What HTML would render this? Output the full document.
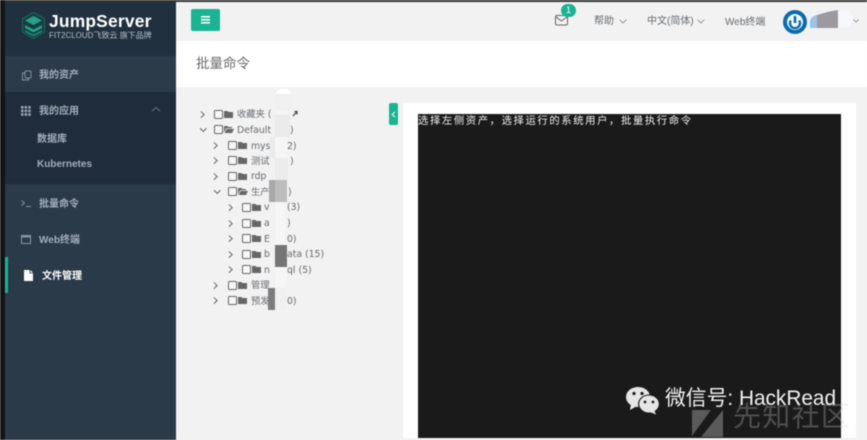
<!DOCTYPE html>
<html><head><meta charset="utf-8">
<style>
html,body{margin:0;padding:0;width:867px;height:440px;overflow:hidden;background:#f2f2f3}
body{font-family:"Liberation Sans","Noto Sans CJK SC",sans-serif;position:relative}
div,span,svg{position:absolute;white-space:nowrap}
#wrap{position:absolute;left:0;top:0;width:867px;height:440px;overflow:hidden;filter:blur(.45px)}
.nav{color:#a3aebb;font-size:10px;font-weight:bold;line-height:14px;margin-top:1px}
.t{color:#676a6c;font-size:9.3px;line-height:14px;font-family:"DejaVu Sans","Noto Sans CJK SC",sans-serif;margin-top:1px}
.cb{width:6.5px;height:6.5px;border:1px solid #666;border-radius:1.5px;background:#f7f7f7;margin-top:-1px}
.ar{width:3.5px;height:3.5px;border-top:1px solid #666;border-right:1px solid #666;transform:rotate(45deg);margin-left:-1px}
.ad{width:3.5px;height:3.5px;border-bottom:1px solid #666;border-right:1px solid #666;transform:rotate(45deg);margin-top:-1px}
.top{color:#676a6c;font-size:10px;line-height:14px;margin-top:1px}
</style></head><body><div id="wrap">

<!-- frame -->
<div style="left:0;top:0;width:867px;height:2px;background:#333"></div>
<div style="left:0;top:0;width:5px;height:440px;background:#141414"></div>

<!-- sidebar -->
<div style="left:5px;top:2px;width:171px;height:438px;background:#2a3a49"></div>
<div style="left:5px;top:2px;width:171px;height:54px;background:#20303f"></div>
<div style="left:5px;top:56px;width:171px;height:36px;background:#2b3b4a"></div>
<div style="left:5px;top:92px;width:171px;height:92px;background:#1e2c3b"></div>
<div style="left:5px;top:257px;width:3px;height:36px;background:#1ab394"></div>

<!-- logo -->
<svg style="left:21px;top:11px" width="25" height="29" viewBox="0 0 25 29">
<path d="M12.5 1.5 23.5 7.5V21L12.5 27.5 1.5 21V7.5Z" fill="#1b3a42" stroke="#1b6b60" stroke-width="1"/>
<path d="M4 9.5 12.5 5 21 9.5 12.5 14Z" fill="#21a585"/>
<path d="M4 14 12.5 18.5 21 14V17L12.5 21.5 4 17Z" fill="#21a585"/>
<path d="M4 19 12.5 23.5 21 19V21L12.5 25.5 4 21Z" fill="#1c8a70"/>
</svg>
<div style="left:49px;top:9px;color:#fff;font-size:17.4px;font-weight:bold;line-height:24px;letter-spacing:.2px">JumpServer</div>
<div style="left:49px;top:30px;color:#b6bfc8;font-size:8px;line-height:11px">FIT2CLOUD飞致云 旗下品牌</div>

<!-- nav -->
<svg style="left:21px;top:70px" width="11" height="11" viewBox="0 0 11 11" fill="none" stroke="#8a95a2" stroke-width=".9"><rect x="4" y="1" width="6" height="7" rx="1"/><path d="M4 3H1.5V10H7.5V8"/></svg>
<div class="nav" style="left:39px;top:68px">我的资产</div>

<svg style="left:21px;top:106px" width="10" height="10" viewBox="0 0 10 10" fill="#97a1ad"><rect x="0" y="0" width="2.6" height="2.6"/><rect x="3.6" y="0" width="2.6" height="2.6"/><rect x="7.2" y="0" width="2.6" height="2.6"/><rect x="0" y="3.6" width="2.6" height="2.6"/><rect x="3.6" y="3.6" width="2.6" height="2.6"/><rect x="7.2" y="3.6" width="2.6" height="2.6"/><rect x="0" y="7.2" width="2.6" height="2.6"/><rect x="3.6" y="7.2" width="2.6" height="2.6"/><rect x="7.2" y="7.2" width="2.6" height="2.6"/></svg>
<div class="nav" style="left:39px;top:104px">我的应用</div>
<svg style="left:151px;top:106px" width="10" height="6" viewBox="0 0 10 6" fill="none" stroke="#6d7a88" stroke-width=".9"><path d="M1 5 5 1.5 9 5"/></svg>
<div class="nav" style="left:37px;top:132px">数据库</div>
<div class="nav" style="left:37px;top:157px">Kubernetes</div>

<svg style="left:21px;top:199px" width="11" height="9" viewBox="0 0 11 9" fill="none" stroke="#8a95a2" stroke-width=".9"><path d="M.5 1.5 3.5 4 .5 6.5M5 7.5H10"/></svg>
<div class="nav" style="left:39px;top:197px">批量命令</div>

<svg style="left:21px;top:235px" width="10" height="9" viewBox="0 0 10 9"><path d="M0 0H10V9H0ZM1 2.5V8H9V2.5Z" fill="#8a95a2" fill-rule="evenodd"/></svg>
<div class="nav" style="left:39px;top:233px">Web终端</div>

<svg style="left:24px;top:270px" width="9" height="11" viewBox="0 0 9 11"><path d="M0 0H5.5V3.5H9V11H0ZM6.3 0 9 2.7H6.3Z" fill="#fff"/></svg>
<div class="nav" style="left:42px;top:269px;color:#fff">文件管理</div>

<!-- top bar -->
<div style="left:176px;top:2px;width:691px;height:39px;background:#f2f2f3"></div>
<div style="left:191px;top:9px;width:29px;height:22px;background:#1ab394;border-radius:2px"></div>
<svg style="left:201px;top:16px" width="9" height="8" viewBox="0 0 9 8" fill="#fff"><rect y="0" width="9" height="1.6"/><rect y="3" width="9" height="1.6"/><rect y="6" width="9" height="1.6"/></svg>

<svg style="left:555px;top:15px" width="13" height="11" viewBox="0 0 13 11" fill="none" stroke="#666" stroke-width="1"><rect x=".5" y=".5" width="12" height="9.5" rx="1.5"/><path d="M1 2 6.5 6 12 2"/></svg>
<div style="left:561px;top:4px;width:15px;height:13px;background:#1ab394;border-radius:7px;color:#fff;font-size:9px;line-height:13px;text-align:center">1</div>
<div class="top" style="left:594px;top:14px">帮助</div>
<svg style="left:619px;top:19px" width="8" height="5" viewBox="0 0 8 5" fill="none" stroke="#888" stroke-width=".8"><path d="M.7 .7 4 4 7.3 .7"/></svg>
<div class="top" style="left:647px;top:14px">中文(简体)</div>
<svg style="left:697px;top:19px" width="8" height="5" viewBox="0 0 8 5" fill="none" stroke="#888" stroke-width=".8"><path d="M.7 .7 4 4 7.3 .7"/></svg>
<div class="top" style="left:725px;top:15px">Web终端</div>

<svg style="left:783px;top:10px" width="24" height="24" viewBox="0 0 24 24"><circle cx="12" cy="12" r="12" fill="#0a6bab"/><circle cx="12" cy="12" r="8" fill="#f4f8fb"/><path d="M7.8 10.5a5 5 0 1 0 8.4 0" fill="none" stroke="#0a6bab" stroke-width="2.4"/><rect x="10.7" y="6" width="2.6" height="7" fill="#0a6bab"/></svg>
<svg style="left:810px;top:9px" width="44" height="20" viewBox="0 0 44 20"><path d="M0 19V12Q1 7 7 6V19Z" fill="#9dc3e6"/><path d="M7 6Q20 2 28 1V19H7Z" fill="#9c9aa0"/><path d="M28 1H36Q43 4 43 10Q41 17 35 19H28Z" fill="#f7f8fc"/></svg>
<svg style="left:853px;top:19px" width="6" height="4" viewBox="0 0 6 4" fill="none" stroke="#888" stroke-width=".8"><path d="M.6 .6 3 3 5.4 .6"/></svg>

<!-- title band -->
<div style="left:176px;top:41px;width:691px;height:46px;background:#fff"></div>
<div style="left:196px;top:55px;color:#676a6c;font-size:13.5px;line-height:18px">批量命令</div>

<!-- tree -->
<div class="ar" style="left:200px;top:112px"></div><div class="cb" style="left:214px;top:111px"></div>
<svg style="left:224px;top:110px" width="9" height="8" viewBox="0 0 9 8"><path d="M0 1H3.5L4.5 2H9V8H0Z" fill="#666"/></svg>
<div class="t" style="left:237px;top:107px">收藏夹 (</div>

<div class="ad" style="left:201px;top:127px"></div><div class="cb" style="left:214px;top:126px"></div>
<svg style="left:224px;top:125px" width="10" height="8" viewBox="0 0 10 8"><path d="M0 1H3.5L4.5 2H8V3.2H2L0 8ZM2.5 4H10L8 8H.8Z" fill="#666"/></svg>
<div class="t" style="left:237px;top:123px">Default</div>
<div class="t" style="left:290px;top:123px">)</div>

<div class="ar" style="left:213px;top:143px"></div><div class="cb" style="left:228px;top:142px"></div>
<svg style="left:238px;top:141px" width="9" height="8" viewBox="0 0 9 8"><path d="M0 1H3.5L4.5 2H9V8H0Z" fill="#666"/></svg>
<div class="t" style="left:251px;top:139px">mys</div>
<div class="t" style="left:287px;top:139px">2)</div>

<div class="ar" style="left:213px;top:158px"></div><div class="cb" style="left:228px;top:157px"></div>
<svg style="left:238px;top:156px" width="9" height="8" viewBox="0 0 9 8"><path d="M0 1H3.5L4.5 2H9V8H0Z" fill="#666"/></svg>
<div class="t" style="left:251px;top:154px">测试</div>
<div class="t" style="left:290px;top:154px">)</div>

<div class="ar" style="left:213px;top:174px"></div><div class="cb" style="left:228px;top:173px"></div>
<svg style="left:238px;top:172px" width="9" height="8" viewBox="0 0 9 8"><path d="M0 1H3.5L4.5 2H9V8H0Z" fill="#666"/></svg>
<div class="t" style="left:251px;top:169px">rdp</div>

<div class="ad" style="left:215px;top:189px"></div><div class="cb" style="left:228px;top:188px"></div>
<svg style="left:238px;top:187px" width="10" height="8" viewBox="0 0 10 8"><path d="M0 1H3.5L4.5 2H8V3.2H2L0 8ZM2.5 4H10L8 8H.8Z" fill="#666"/></svg>
<div class="t" style="left:251px;top:185px">生产</div>
<div class="t" style="left:288px;top:185px">)</div>

<div class="ar" style="left:228px;top:205px"></div><div class="cb" style="left:242px;top:204px"></div>
<svg style="left:252px;top:203px" width="9" height="8" viewBox="0 0 9 8"><path d="M0 1H3.5L4.5 2H9V8H0Z" fill="#666"/></svg>
<div class="t" style="left:264px;top:200px">v</div>
<div class="t" style="left:287px;top:200px">(3)</div>

<div class="ar" style="left:228px;top:221px"></div><div class="cb" style="left:242px;top:220px"></div>
<svg style="left:252px;top:219px" width="9" height="8" viewBox="0 0 9 8"><path d="M0 1H3.5L4.5 2H9V8H0Z" fill="#666"/></svg>
<div class="t" style="left:264px;top:216px">a</div>
<div class="t" style="left:287px;top:216px">)</div>

<div class="ar" style="left:228px;top:236px"></div><div class="cb" style="left:242px;top:235px"></div>
<svg style="left:252px;top:234px" width="9" height="8" viewBox="0 0 9 8"><path d="M0 1H3.5L4.5 2H9V8H0Z" fill="#666"/></svg>
<div class="t" style="left:264px;top:232px">E</div>
<div class="t" style="left:287px;top:232px">0)</div>

<div class="ar" style="left:228px;top:252px"></div><div class="cb" style="left:242px;top:251px"></div>
<svg style="left:252px;top:250px" width="9" height="8" viewBox="0 0 9 8"><path d="M0 1H3.5L4.5 2H9V8H0Z" fill="#666"/></svg>
<div class="t" style="left:264px;top:247px">b</div>
<div class="t" style="left:287px;top:247px">ata (15)</div>

<div class="ar" style="left:228px;top:267px"></div><div class="cb" style="left:242px;top:266px"></div>
<svg style="left:252px;top:265px" width="9" height="8" viewBox="0 0 9 8"><path d="M0 1H3.5L4.5 2H9V8H0Z" fill="#666"/></svg>
<div class="t" style="left:264px;top:263px">n</div>
<div class="t" style="left:287px;top:263px">ql (5)</div>

<div class="ar" style="left:213px;top:283px"></div><div class="cb" style="left:228px;top:282px"></div>
<svg style="left:238px;top:281px" width="9" height="8" viewBox="0 0 9 8"><path d="M0 1H3.5L4.5 2H9V8H0Z" fill="#666"/></svg>
<div class="t" style="left:251px;top:278px">管理</div>

<div class="ar" style="left:213px;top:298px"></div><div class="cb" style="left:228px;top:297px"></div>
<svg style="left:238px;top:296px" width="9" height="8" viewBox="0 0 9 8"><path d="M0 1H3.5L4.5 2H9V8H0Z" fill="#666"/></svg>
<div class="t" style="left:251px;top:294px">预发</div>
<div class="t" style="left:287px;top:294px">0)</div>

<!-- redaction patches -->
<div style="left:276px;top:89px;width:15px;height:5px;background:#fff;border-radius:8px 8px 0 0"></div>
<div style="left:275px;top:94px;width:15px;height:16px;background:#f0f0f1"></div>
<div style="left:275px;top:110px;width:12px;height:4px;background:#f4f4f5"></div>
<svg style="left:292px;top:110px" width="6" height="8" viewBox="0 0 6 8" fill="none" stroke="#444" stroke-width="1.2"><path d="M1 6 4.5 2M2.5 1.5H5V4.5"/></svg>
<div style="left:275px;top:115px;width:15px;height:22px;background:#ebebec"></div>
<div style="left:270px;top:137px;width:5px;height:21px;background:#eaeaeb"></div>
<div style="left:275px;top:137px;width:12px;height:21px;background:#f5f5f6"></div>
<div style="left:275px;top:158px;width:13px;height:22px;background:#ececed"></div>
<div style="left:269px;top:180px;width:6px;height:22px;background:#a8a8a9"></div>
<div style="left:275px;top:180px;width:12px;height:22px;background:#bcbcbd"></div>
<div style="left:275px;top:202px;width:10px;height:43px;background:#f6f6f7"></div>
<div style="left:275px;top:245px;width:12px;height:22px;background:#757576"></div>
<div style="left:275px;top:267px;width:12px;height:21px;background:#f6f6f7"></div>
<div style="left:268px;top:288px;width:7px;height:22px;background:#7c7c7d"></div>
<div style="left:275px;top:288px;width:11px;height:22px;background:#f0f0f1"></div>

<!-- toggle -->
<div style="left:389px;top:103px;width:9px;height:22px;background:#1ab394;border-radius:2px"></div>
<svg style="left:391px;top:111px" width="5" height="7" viewBox="0 0 5 7" fill="none" stroke="#fff" stroke-width="1"><path d="M4 .8 1.2 3.5 4 6.2"/></svg>

<!-- terminal -->
<div style="left:403px;top:103px;width:453px;height:335px;background:#fff"></div>
<div style="left:418px;top:114px;width:423px;height:324px;background:#1b1a1a"></div>
<div style="left:418px;top:115px;color:#f2f2f2;font-size:10.4px;line-height:14px;letter-spacing:1.55px;font-family:'Liberation Mono','Noto Sans CJK SC',monospace">选择左侧资产，选择运行的系统用户，批量执行命令</div>

<!-- watermark -->
<svg style="left:625px;top:386px" width="35" height="29" viewBox="0 0 35 29">
<ellipse cx="13" cy="11" rx="12" ry="10" fill="#e6e6e6"/><path d="M6 18 5 24 12 20Z" fill="#e6e6e6"/>
<circle cx="9" cy="7.5" r="1.6" fill="#1b1a1a"/><circle cx="17" cy="7.5" r="1.6" fill="#1b1a1a"/>
<ellipse cx="24" cy="18" rx="11" ry="9.5" fill="#1b1a1a"/>
<ellipse cx="24" cy="18" rx="9.8" ry="8.5" fill="#e6e6e6"/><path d="M29 24 31 28.5 25 26Z" fill="#e6e6e6"/>
<circle cx="20" cy="16" r="1.4" fill="#1b1a1a"/><circle cx="28" cy="16" r="1.4" fill="#1b1a1a"/>
</svg>
<svg style="left:692px;top:408px" width="31" height="30" viewBox="0 0 31 30"><path d="M0 2H19L0 28ZM31 2V29H9Z" fill="#5a5a5a"/></svg>
<div style="left:733px;top:400px;color:#4f4f4f;font-size:28px;line-height:34px;letter-spacing:1.3px">先知社区</div>
<div style="left:841px;top:400px;width:15px;height:34px;overflow:hidden"><div style="left:-108px;top:0;color:#f3f3f3;font-size:28px;line-height:34px;letter-spacing:1.3px">先知社区</div></div>
<div style="left:665px;top:385px;color:#f2f2f2;font-size:20.8px;line-height:28px">微信号: HackRead</div>

</div></body></html>
